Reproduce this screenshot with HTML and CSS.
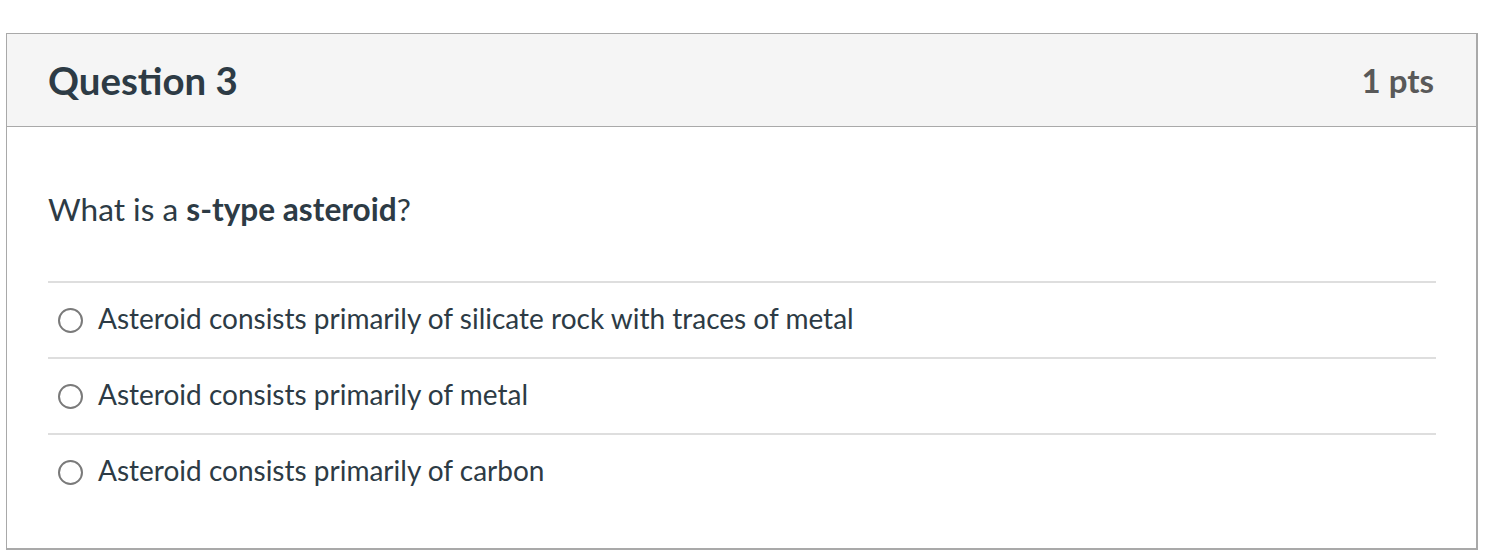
FILE: index.html
```html
<!DOCTYPE html>
<html>
<head>
<meta charset="utf-8">
<link rel="stylesheet" href="styles.css">
</head>
<body>
<div class="card">
  <div class="header">
    <h2 class="title">Question 3</h2>
    <span class="pts">1 pts</span>
  </div>
  <div class="content">
    <p class="question">What is a <strong>s-type asteroid</strong>?</p>
    <div class="answers">
      <label class="answer"><span class="radio"></span><span class="atext">Asteroid consists primarily of silicate rock with traces of metal</span></label>
      <label class="answer"><span class="radio"></span><span class="atext">Asteroid consists primarily of metal</span></label>
      <label class="answer"><span class="radio"></span><span class="atext">Asteroid consists primarily of carbon</span></label>
    </div>
  </div>
</div>
</body>
</html>
```

FILE: styles.css
```css
html, body {
  margin: 0;
  padding: 0;
  background: #ffffff;
}
body {
  font-family: Lato, "Open Sans", sans-serif;
  color: #2d3b45;
  padding: 33px 0 0 6px;
}
.card {
  border: 1px solid #a9a9a9;
  border-right-width: 2px;
  border-bottom-width: 2px;
  width: 1472px;
  box-sizing: border-box;
  height: 517px;
}
.header {
  background: #f5f5f5;
  border-bottom: 1px solid #a9a9a9;
  height: 93px;
  box-sizing: border-box;
  display: flex;
  align-items: center;
  justify-content: space-between;
  padding: 0 42px 0 41px;
}
.title {
  margin: 0;
  font-size: 38.4px;
  font-weight: 700;
  color: #2d3b45;
}
.pts {
  font-size: 33px;
  font-weight: 700;
  color: #595959;
}
.content {
  padding: 0 40px 0 41px;
}
.question {
  margin: 0 0 52px 0;
  padding-top: 62px;
  font-size: 31.6px;
  line-height: 40px;
}
.question strong {
  font-weight: 700;
}
.answers {
  display: flex;
  flex-direction: column;
}
.answer {
  display: flex;
  align-items: center;
  border-top: 2px solid #dedede;
  height: 76px;
  box-sizing: border-box;
  padding-left: 10px;
}
.radio {
  width: 25px;
  height: 25px;
  border: 2px solid #7a7a7a;
  border-radius: 50%;
  box-sizing: border-box;
  margin-right: 15px;
  flex: none;
}
.atext {
  font-size: 28px;
  line-height: 34px;
  padding-bottom: 4px;
}
```
